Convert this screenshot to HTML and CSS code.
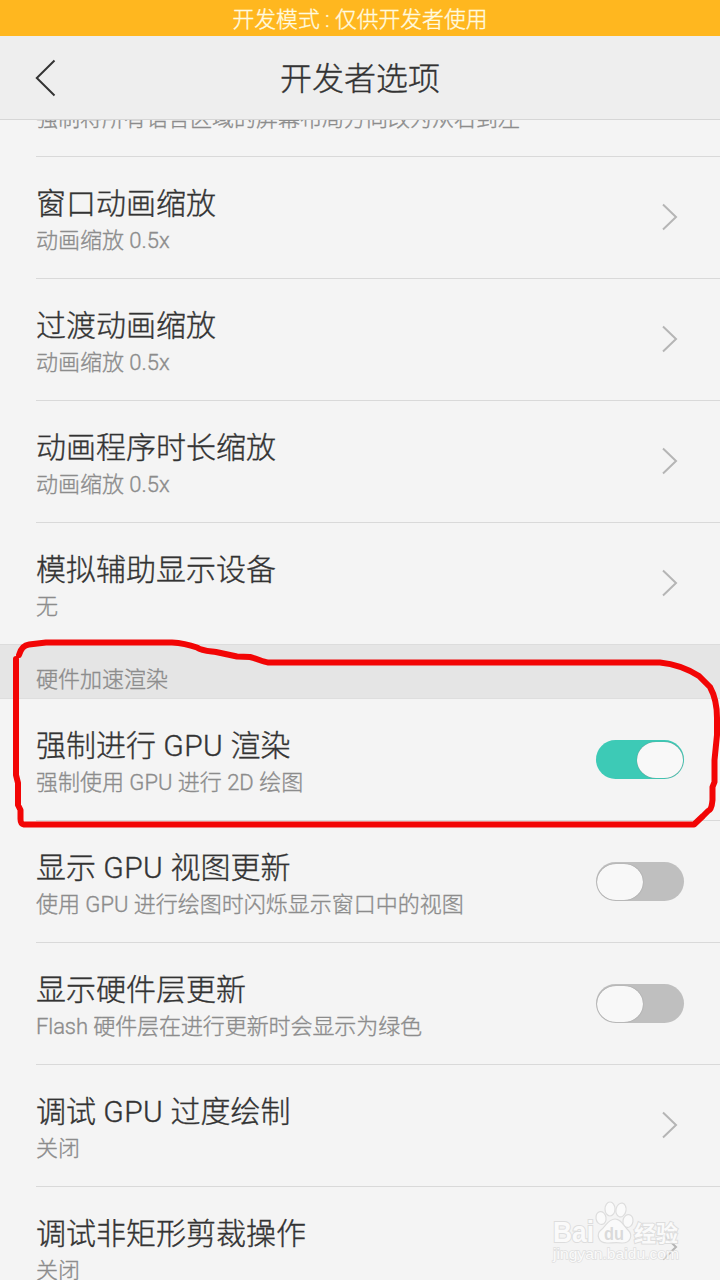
FILE: index.html
```html
<!DOCTYPE html>
<html lang="zh-CN">
<head>
<meta charset="utf-8">
<title>开发者选项</title>
<link rel="stylesheet" href="styles.css">
</head>
<body>
<div class="screen">
  <div class="status">开发模式 : 仅供开发者使用</div>
  <header class="header">
    <svg class="back" width="24" height="40" viewBox="0 0 24 40"><path d="M19.500 2.500L1.800 20L19.500 37.500"/></svg>
    <h1 class="heading">开发者选项</h1>
  </header>
  <main class="list">
    <div class="row row-clipped"><div class="text"><div class="sub">强制将所有语言区域的屏幕布局方向改为从右到左</div></div></div>
    <div class="row"><div class="text"><div class="title">窗口动画缩放</div><div class="sub">动画缩放 0.5x</div></div><svg class="chevron" width="18" height="30" viewBox="0 0 18 30"><path d="M2 2.500L15 15L2 27.500"/></svg></div>
    <div class="row"><div class="text"><div class="title">过渡动画缩放</div><div class="sub">动画缩放 0.5x</div></div><svg class="chevron" width="18" height="30" viewBox="0 0 18 30"><path d="M2 2.500L15 15L2 27.500"/></svg></div>
    <div class="row"><div class="text"><div class="title">动画程序时长缩放</div><div class="sub">动画缩放 0.5x</div></div><svg class="chevron" width="18" height="30" viewBox="0 0 18 30"><path d="M2 2.500L15 15L2 27.500"/></svg></div>
    <div class="row row-last"><div class="text"><div class="title">模拟辅助显示设备</div><div class="sub">无</div></div><svg class="chevron" width="18" height="30" viewBox="0 0 18 30"><path d="M2 2.500L15 15L2 27.500"/></svg></div>
    <div class="section">硬件加速渲染</div>
    <div class="row"><div class="text"><div class="title">强制进行 <span class="latin">GPU</span> 渲染</div><div class="sub">强制使用 GPU 进行 2D 绘图</div></div><div class="switch switch-on"><div class="knob"></div></div></div>
    <div class="row"><div class="text"><div class="title">显示 <span class="latin">GPU</span> 视图更新</div><div class="sub">使用 GPU 进行绘图时闪烁显示窗口中的视图</div></div><div class="switch"><div class="knob"></div></div></div>
    <div class="row"><div class="text"><div class="title">显示硬件层更新</div><div class="sub sub-tight">Flash 硬件层在进行更新时会显示为绿色</div></div><div class="switch"><div class="knob"></div></div></div>
    <div class="row"><div class="text"><div class="title">调试 <span class="latin">GPU</span> 过度绘制</div><div class="sub">关闭</div></div><svg class="chevron" width="18" height="30" viewBox="0 0 18 30"><path d="M2 2.500L15 15L2 27.500"/></svg></div>
    <div class="row"><div class="text"><div class="title">调试非矩形剪裁操作</div><div class="sub">关闭</div></div><svg class="chevron" width="18" height="30" viewBox="0 0 18 30"><path d="M2 2.500L15 15L2 27.500"/></svg></div>
  </main>
  <svg class="marker" width="720" height="200" viewBox="0 630 720 200">
    <path d="M19 655C21 648 24 645 29 644.500L46 642.500H172C182 643 190 645 197 647.500C202 651 208 651 216 652L237 656.500L250 657C258 659 263 662 268 662.500H660C675 664 688 669 699 676L710 687C715 696 717 706 717 718V735L714.500 760V782L712.500 787V800C712 806 711 810 708 811L703 816L694 824.500H24C21 824 20.500 822 20.500 819V810L18 805V783L16 775V659"/>
  </svg>
  <svg class="watermark" width="150" height="70" viewBox="545 1200 150 70">
    <text class="wm-name" x="553" y="1242" textLength="41" lengthAdjust="spacingAndGlyphs">Bai</text>
    <ellipse cx="601" cy="1218" rx="5" ry="6.500" transform="rotate(-10 601 1218)"/>
    <ellipse cx="610" cy="1209" rx="5" ry="7"/>
    <ellipse cx="621" cy="1210" rx="5" ry="7" transform="rotate(12 621 1210)"/>
    <ellipse cx="628" cy="1221" rx="5" ry="6.500" transform="rotate(10 628 1221)"/>
    <path d="M615 1219C608 1219 606 1226 601 1230C596 1234 598 1243 607 1243C612 1243 616 1242 622 1243C631 1243 633 1235 628 1230C623 1225 621 1219 615 1219Z"/>
    <text class="wm-du" x="604" y="1240" textLength="20" lengthAdjust="spacingAndGlyphs">du</text>
    <text class="wm-cn" x="634" y="1241" textLength="44">经验</text>
    <text class="wm-url" x="553" y="1259" textLength="126" lengthAdjust="spacingAndGlyphs">jingyan.baidu.com</text>
  </svg>
</div>
</body>
</html>
```
FILE: styles.css
```css
* { box-sizing: border-box; }
body { margin: 0; background: #f4f4f4; }
.screen {
  position: relative;
  display: flex;
  flex-direction: column;
  width: 720px;
  height: 1280px;
  overflow: hidden;
  background: #f4f4f4;
  color: #333;
  font-family: Roboto, "Noto Sans CJK SC", sans-serif;
  font-weight: 300;
  -webkit-text-stroke: .35px currentColor;
}
.status {
  flex: none;
  height: 36px;
  padding-top: 2px;
  line-height: 36px;
  background: #ffb71f;
  color: #fffbe0;
  font-size: 21.8px;
  text-align: center;
}
.header {
  flex: none;
  display: grid;
  grid-template-columns: 84px 1fr 84px;
  align-items: center;
  height: 84px;
  background: #eee;
  border-bottom: 1px solid #d6d6d6;
}
.back { margin-left: 35px; fill: none; stroke: #333; stroke-width: 2; }
.heading { margin: 0; padding-top: 2px; font-size: 32px; line-height: 48px; font-weight: 300; text-align: center; }
.list { flex: 1; min-height: 0; overflow: hidden; }
.row {
  display: flex;
  align-items: center;
  justify-content: space-between;
  height: 122px;
  margin-left: 36px;
  padding-right: 36px;
  border-bottom: 1px solid #d9d9d9;
}
.row-last { height: 121px; border-bottom: 0; }
.row-clipped { height: 37px; align-items: flex-end; padding-bottom: 21px; overflow: hidden; }
.text { display: flex; flex-direction: column; gap: 1px; white-space: nowrap; }
.row:not(.row-clipped) .text { padding-bottom: 4px; padding-top: 10px; }
.title { font-size: 30px; line-height: 40px; }
.latin { letter-spacing: .4px; }
.sub { font-size: 22px; line-height: 32px; color: #8c8c8c; }
.sub-tight { letter-spacing: -.08px; }
.chevron { margin-right: 5px; margin-bottom: 2px; fill: none; stroke: #b5b5b5; stroke-width: 2; }
.section {
  height: 55px;
  padding: 19px 36px 0;
  background: #e5e5e5;
  border-top: 1px solid #dcdcdc;
  border-bottom: 1px solid #dedede;
  color: #8c8c8c;
  font-size: 22px;
  line-height: 32px;
}
.switch {
  display: flex;
  width: 88px;
  height: 39px;
  padding: 1.5px 1px;
  border-radius: 20px;
  background: #bfbfbf;
}
.switch-on { justify-content: flex-end; background: #3dcab6; }
.knob { width: 46px; height: 36px; border-radius: 19px / 18px; background: #f8f8f8; box-shadow: 0 0 1px #777; }
.marker { position: absolute; left: 0; top: 630px; fill: none; stroke: #f20505; stroke-width: 6; stroke-linecap: round; stroke-linejoin: round; }
.watermark {
  position: absolute;
  left: 545px;
  top: 1200px;
  fill: #fcfcfc;
  stroke: #dadada;
  stroke-width: 1.2;
  opacity: .85;
  font-family: "Liberation Sans", "Noto Sans CJK SC", sans-serif;
  -webkit-text-stroke: 0;
}
.watermark text { paint-order: stroke; stroke: #dadada; stroke-width: 2; }
.wm-name { font-size: 29px; font-weight: 700; }
.watermark .wm-du { font-size: 19px; font-weight: 700; fill: #d6d6d6; stroke: none; }
.wm-cn { font-size: 22px; font-weight: 700; }
.watermark .wm-url { font-size: 15px; stroke: #dcdcdc; stroke-width: 1.4; }
```
